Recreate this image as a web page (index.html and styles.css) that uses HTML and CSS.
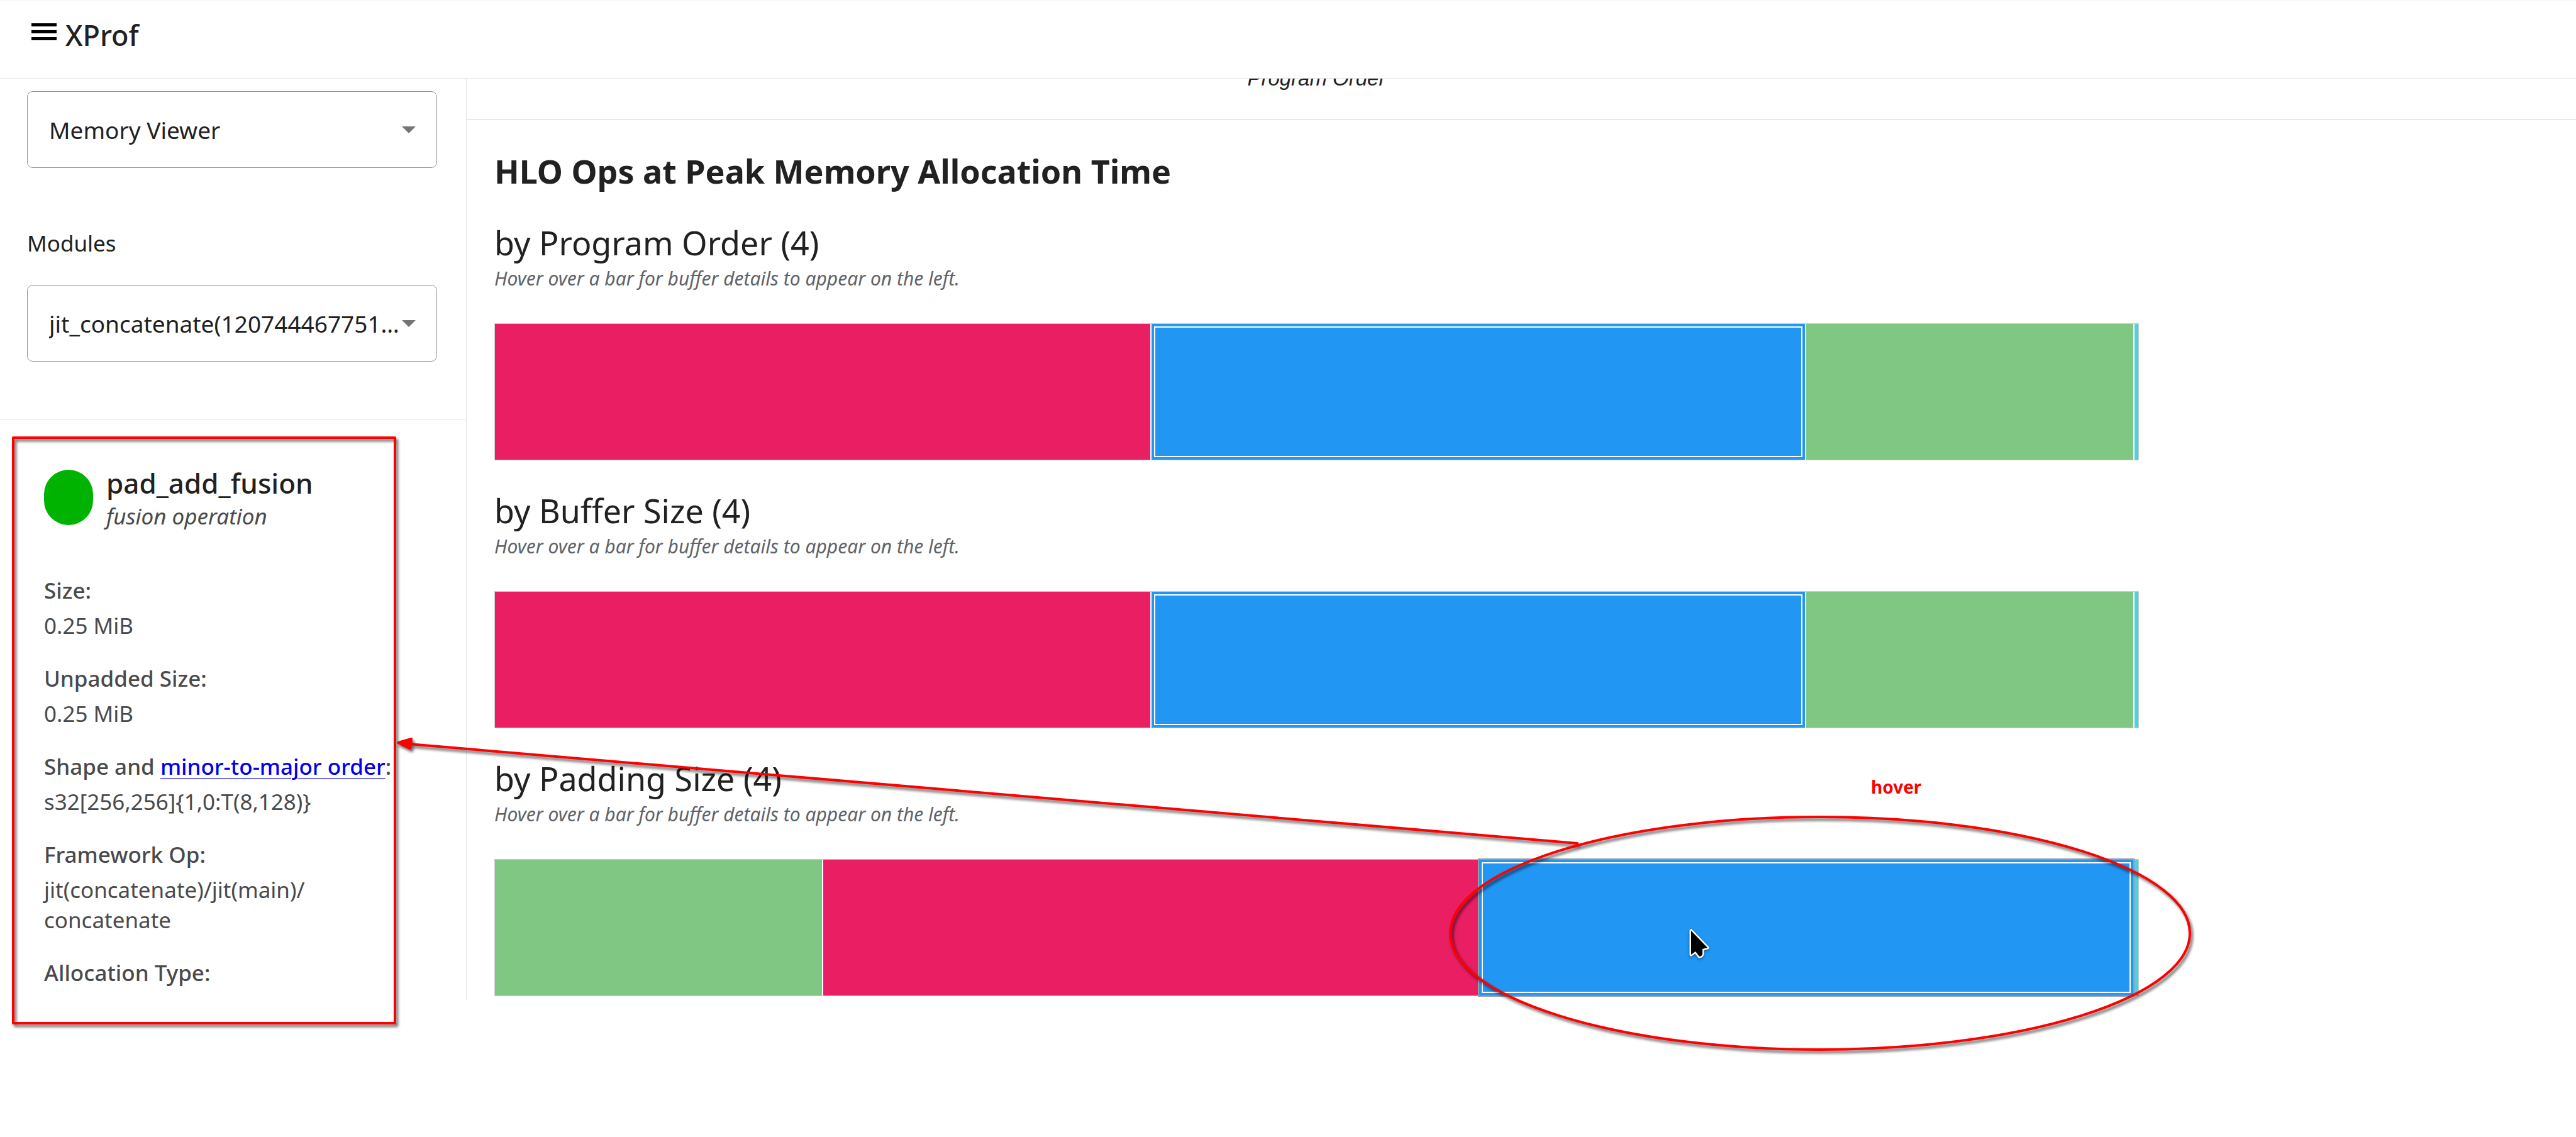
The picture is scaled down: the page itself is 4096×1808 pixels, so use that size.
FILE: index.html
```html
<!DOCTYPE html>
<html lang="en">
<head>
<meta charset="utf-8">
<title>XProf</title>
<link rel="stylesheet" href="styles.css">
</head>
<body>
<header class="topbar">
  <button class="menu-button" type="button" aria-label="Menu">
    <svg class="menu-icon" viewBox="0 0 40 28" aria-hidden="true"><path d="M0 0h40v5H0zM0 11h40v5H0zM0 22h40v5H0z"/></svg>
  </button>
  <h1 class="brand">XProf</h1>
</header>
<div class="layout">
  <aside class="sidebar">
    <section class="filters">
      <div class="select-box">
        <select class="select" aria-label="Tool"><option>Memory Viewer</option></select>
        <svg class="caret" viewBox="0 0 22 11" aria-hidden="true"><path d="M0 0h22L11 11z"/></svg>
      </div>
      <label class="field-label" for="module">Modules</label>
      <div class="select-box">
        <select class="select" id="module"><option>jit_concatenate(120744467751…</option></select>
        <svg class="caret" viewBox="0 0 22 11" aria-hidden="true"><path d="M0 0h22L11 11z"/></svg>
      </div>
    </section>
    <section class="details">
      <div class="op">
        <span class="op-dot"></span>
        <div>
          <h2 class="op-name">pad_add_fusion</h2>
          <p class="op-kind">fusion operation</p>
        </div>
      </div>
      <dl class="facts">
        <dt>Size:</dt><dd>0.25 MiB</dd>
        <dt>Unpadded Size:</dt><dd>0.25 MiB</dd>
        <dt>Shape and <a href="#layout">minor-to-major order</a>:</dt><dd>s32[256,256]{1,0:T(8,128)}</dd>
        <dt>Framework Op:</dt><dd>jit(concatenate)/jit(main)/<wbr>concatenate</dd>
        <dt>Allocation Type:</dt>
      </dl>
    </section>
  </aside>
  <main class="content">
    <div class="timeline"><p class="axis-title">Program Order</p></div>
    <section class="ops">
      <h2 class="ops-title">HLO Ops at Peak Memory Allocation Time</h2>
      <section class="chart">
        <h3 class="chart-title">by Program Order (4)</h3>
        <p class="chart-hint">Hover over a bar for buffer details to appear on the left.</p>
        <div class="bar">
          <span class="seg pink"></span><span class="seg blue"></span><span class="seg green"></span><span class="seg cyan"></span>
        </div>
      </section>
      <section class="chart">
        <h3 class="chart-title">by Buffer Size (4)</h3>
        <p class="chart-hint">Hover over a bar for buffer details to appear on the left.</p>
        <div class="bar">
          <span class="seg pink"></span><span class="seg blue"></span><span class="seg green"></span><span class="seg cyan"></span>
        </div>
      </section>
      <section class="chart">
        <h3 class="chart-title">by Padding Size (4)</h3>
        <p class="chart-hint">Hover over a bar for buffer details to appear on the left.</p>
        <div class="bar">
          <span class="seg green"></span><span class="seg pink"></span><span class="seg blue hovered"></span><span class="seg cyan"></span>
        </div>
      </section>
    </section>
  </main>
</div>
<svg class="notes" viewBox="0 0 4096 1808" aria-hidden="true">
  <g class="note-marks">
    <rect x="21" y="696" width="607" height="931"/>
    <ellipse cx="2894" cy="1484" rx="588" ry="185"/>
    <path d="M650 1183L2508 1341"/>
    <path class="note-head" d="M633 1181L654 1175L652 1190Z"/>
  </g>
  <path class="pointer" d="M2689 1480L2715 1507L2707 1509L2707 1517Q2706 1521 2702 1521L2696 1513L2689 1518Z"/>
</svg>
<p class="note-text">hover</p>
</body>
</html>
```

FILE: styles.css
```css
* {
  box-sizing: border-box;
}

body {
  position: relative;
  min-height: 100vh;
  margin: 0;
  background: #fff;
  color: #212121;
  font-family: "Noto Sans", sans-serif;
  font-size: 35px;
}

h1, h2, h3, p, dl, dd {
  margin: 0;
}

.topbar {
  display: flex;
  align-items: center;
  gap: 14px;
  height: 125px;
  padding: 0 50px 14px;
  border-top: 2px solid #fafafa;
  border-bottom: 1px solid #e4e4e4;
}

.menu-button {
  display: flex;
  padding: 0 0 10px;
  border: 0;
  background: none;
}

.menu-icon {
  width: 40px;
  height: 28px;
}

.brand {
  font-size: 45px;
  font-weight: 500;
  line-height: 60px;
}

.layout {
  display: flex;
  height: 1465px;
}

.sidebar {
  flex: 0 0 742px;
  border-right: 1px solid #e4e4e4;
}

.filters {
  display: flex;
  flex-direction: column;
  height: 542px;
  padding: 20px 46px 0 43px;
  border-bottom: 1px solid #e4e4e4;
}

.select-box {
  position: relative;
}

.select {
  display: block;
  width: 100%;
  height: 122px;
  padding: 0 50px 0 34px;
  border: 1px solid #949494;
  border-radius: 9px;
  appearance: none;
  background: #fff;
  color: #212121;
  font-family: inherit;
  font-size: 37px;
}

.caret {
  position: absolute;
  top: 56px;
  right: 34px;
  width: 22px;
  height: 11px;
  fill: #757575;
}

.field-label {
  margin: 96px 0 42px;
  line-height: 48px;
}

.details {
  padding: 76px 100px 0 70px;
  color: #4a4a4a;
}

.op {
  display: flex;
  gap: 21px;
}

.op-dot {
  flex: none;
  width: 78px;
  height: 88px;
  margin-top: 4px;
  border-radius: 40px;
  background: #00b300;
}

.op-name {
  color: #212121;
  font-size: 44px;
  font-weight: 500;
  line-height: 50px;
}

.op-kind {
  font-style: italic;
  line-height: 56px;
}

.facts dt {
  margin-top: 36px;
  font-weight: 500;
  line-height: 48px;
  white-space: nowrap;
}

.facts dt:first-child {
  margin-top: 66px;
}

.facts dd {
  padding-top: 8px;
  line-height: 48px;
}

.facts a {
  color: #00e;
  text-decoration-thickness: 1px;
  text-underline-offset: 5px;
}

.content {
  flex: 1;
}

.timeline {
  height: 66px;
  padding-left: 44px;
  overflow: hidden;
  border-bottom: 1px solid #d4d4d4;
}

.axis-title {
  width: 79%;
  margin-top: -20px;
  font-family: "Liberation Sans", sans-serif;
  font-size: 33px;
  font-style: italic;
  line-height: 40px;
  text-align: center;
}

.ops {
  padding: 44px 0 0 44px;
}

.ops-title {
  margin-bottom: 40px;
  font-size: 52px;
  font-weight: 700;
  line-height: 74px;
}

.chart {
  margin-bottom: 43px;
}

.chart-title {
  font-size: 52px;
  font-weight: 400;
  line-height: 74px;
}

.chart-hint {
  color: #5f6368;
  font-size: 30px;
  font-style: italic;
  line-height: 40px;
}

.bar {
  display: flex;
  gap: 2px;
  width: 79%;
  height: 218px;
  margin-top: 51px;
  border: 1px solid #ccc;
}

.seg {
  flex: 2 1 0;
}

.pink {
  flex-grow: 1042;
  background: #e91e63;
}

.blue {
  flex-grow: 1040;
  background: #2196f3;
  outline: 2px solid #fff;
  outline-offset: -6px;
}

.green {
  flex-grow: 520;
  background: #81c784;
}

.cyan {
  flex: 0 0 6px;
  background: #4dd0e1;
}

.hovered {
  box-shadow: 0 0 0 2px #9a9fa5;
}

.notes {
  position: absolute;
  top: 0;
  left: 0;
  width: 100%;
  pointer-events: none;
}

.note-marks {
  fill: none;
  stroke: #f00;
  stroke-width: 4px;
  stroke-linejoin: round;
  stroke-linecap: round;
  filter: drop-shadow(3px 4px 2px rgba(0, 0, 0, 0.6));
}

.note-head {
  fill: #f00;
}

.pointer {
  fill: #000;
  stroke: #fff;
  stroke-width: 5px;
  stroke-linejoin: round;
  paint-order: stroke;
  filter: drop-shadow(0 2px 2px rgba(0, 0, 0, 0.4));
}

.note-text {
  position: absolute;
  top: 1231px;
  left: 2975px;
  color: #f00;
  font-size: 28px;
  font-weight: 700;
  line-height: 40px;
}
```
